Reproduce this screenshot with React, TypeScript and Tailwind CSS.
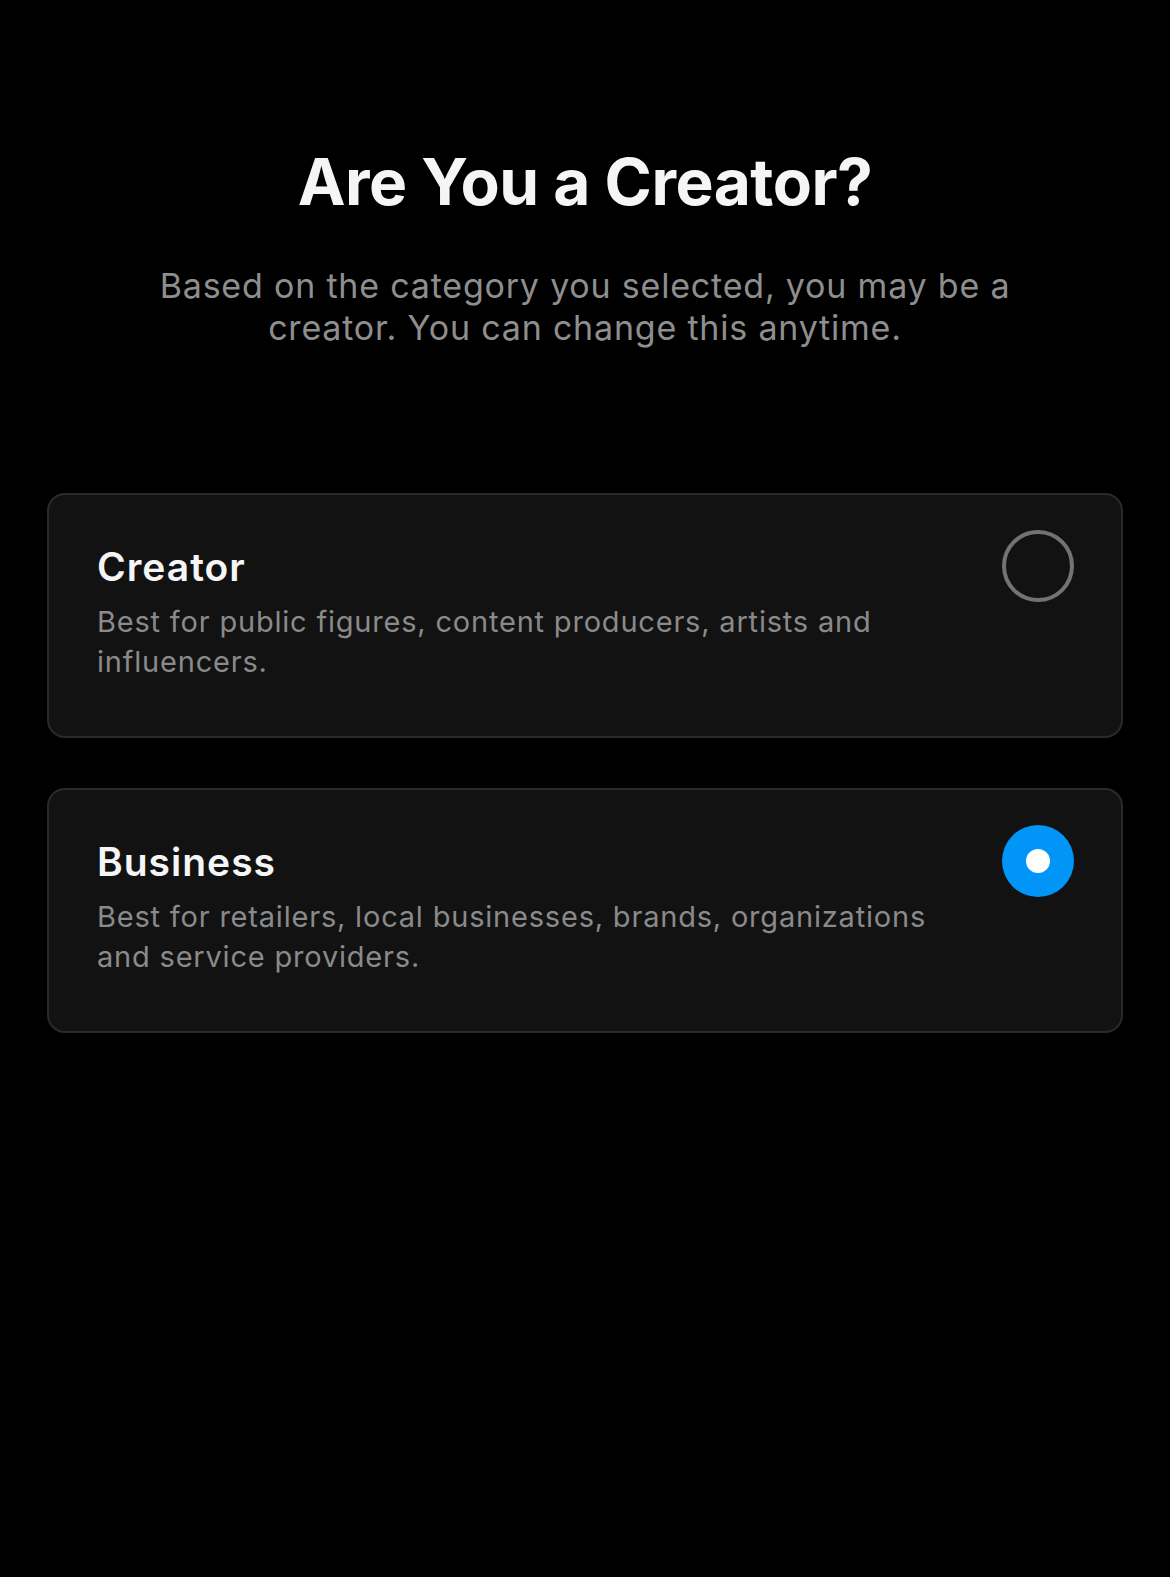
import React, { useState } from "react";

type Option = {
  id: string;
  title: string;
  description: string;
};

const options: Option[] = [
  {
    id: "creator",
    title: "Creator",
    description: "Best for public figures, content producers, artists and influencers.",
  },
  {
    id: "business",
    title: "Business",
    description:
      "Best for retailers, local businesses, brands, organizations and service providers.",
  },
];

function Radio({ checked }: { checked: boolean }) {
  if (checked) {
    return (
      <div className="flex h-[72px] w-[72px] shrink-0 items-center justify-center rounded-full bg-[#0095f6]">
        <div className="h-6 w-6 rounded-full bg-white"></div>
      </div>
    );
  }
  return (
    <div className="h-[72px] w-[72px] shrink-0 rounded-full border-4 border-[#737373]"></div>
  );
}

export default function App() {
  const [selected, setSelected] = useState("business");

  return (
    <div
      className="min-h-screen w-full bg-black px-[47px] pt-[143px]"
      style={{ fontFamily: "Inter, 'Noto Sans', sans-serif" }}
    >
      {/* Header */}
      <h1 className="text-center text-[64px] font-bold leading-[77px] tracking-[-0.5px] text-[#f5f5f5]">
        Are You a Creator?
      </h1>
      <p className="mx-auto mt-[45px] max-w-[920px] text-center text-[34px] leading-[42px] tracking-[0.8px] text-[#8e8e8e]">
        Based on the category you selected, you may be a creator. You can change this anytime.
      </p>

      {/* Options */}
      <div className="mt-[144px] flex flex-col gap-[50px]">
        {options.map((opt) => (
          <button
            key={opt.id}
            onClick={() => setSelected(opt.id)}
            className="flex items-start justify-between rounded-[18px] border-2 border-[#2a2a2a] bg-[#121212] pb-[54px] pl-[48px] pr-[47px] pt-[35px] text-left"
          >
            <div className="max-w-[860px] pt-[14px]">
              <div className="text-[39px] font-semibold leading-[46px] tracking-[1px] text-[#f5f5f5]">
                {opt.title}
              </div>
              <div className="mt-[12px] text-[29px] leading-[40px] tracking-[0.8px] text-[#8a8a8a]">
                {opt.description}
              </div>
            </div>
            <Radio checked={selected === opt.id} />
          </button>
        ))}
      </div>
    </div>
  );
}
